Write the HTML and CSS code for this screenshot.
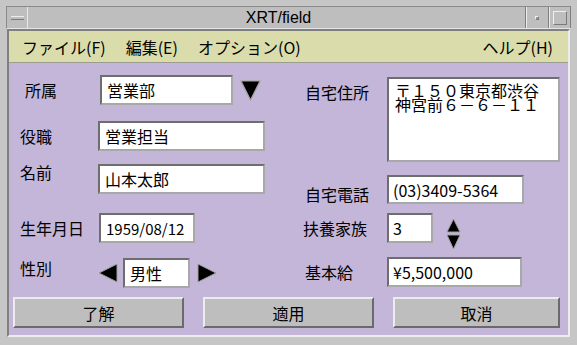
FILE: index.html
```html
<!DOCTYPE html>
<html lang="ja">
<head>
  <meta charset="UTF-8">
  <meta name="viewport" content="width=device-width, initial-scale=1.0">
  <link rel="stylesheet" href="styles.css">
  <title>XRT/field</title>
</head>
<body>
  <div class="window">
    <div class="titlebar">
      <div class="tb-menu"><span class="bar"></span></div>
      <div class="tb-title">XRT/field</div>
      <div class="tb-min"><span class="dot"></span></div>
      <div class="tb-max"><span class="box"></span></div>
    </div>

    <div class="client">
      <div class="menubar">
        <span class="menu">ファイル(<u>F</u>)</span>
        <span class="menu">編集(<u>E</u>)</span>
        <span class="menu">オプション(<u>O</u>)</span>
        <span class="menu help">ヘルプ(<u>H</u>)</span>
      </div>

      <div class="content">
        <div class="form">
          <div class="col col-left">
            <div class="row">
              <label class="lbl indent">所属</label>
              <input class="field f-dept" value="営業部">
              <svg class="drop" width="21" height="21" viewBox="0 0 21 21">
                <polygon points="1,1 20,1 10.5,20" fill="#000" stroke="#a0a0a0" stroke-width="1.2"/>
              </svg>
            </div>
            <div class="row r-title">
              <label class="lbl">役職</label>
              <input class="field f-wide" value="営業担当">
            </div>
            <div class="row r-name">
              <label class="lbl top">名前</label>
              <input class="field f-wide" value="山本太郎">
            </div>
            <div class="row r-birth">
              <label class="lbl">生年月日</label>
              <input class="field f-date" value="1959/08/12">
            </div>
            <div class="row r-sex">
              <label class="lbl top sex">性別</label>
              <svg class="arrow" width="20" height="20" viewBox="0 0 20 20">
                <polygon points="1,10 19,1 19,19" fill="#000" stroke="#a0a0a0"/>
              </svg>
              <input class="field f-sex" value="男性">
              <svg class="arrow arrow-r" width="20" height="20" viewBox="0 0 20 20">
                <polygon points="1,1 19,10 1,19" fill="#000" stroke="#a0a0a0"/>
              </svg>
            </div>
          </div>

          <div class="col col-right">
            <div class="row r-addr">
              <label class="lbl wide top addr">自宅住所</label>
              <textarea class="field f-addr">〒１５０東京都渋谷
神宮前６－６－１１</textarea>
            </div>
            <div class="row r-phone">
              <label class="lbl wide phone">自宅電話</label>
              <input class="field f-phone" value="(03)3409-5364">
            </div>
            <div class="row r-family">
              <label class="lbl wide family">扶養家族</label>
              <input class="field f-num" value="3">
              <svg class="spin" width="15" height="32" viewBox="0 0 15 32">
                <polygon points="7.5,1 14,14 1,14" fill="#000" stroke="#a0a0a0"/>
                <polygon points="1,17 14,17 7.5,31" fill="#000" stroke="#a0a0a0"/>
              </svg>
            </div>
            <div class="row r-salary">
              <label class="lbl wide">基本給</label>
              <input class="field f-salary" value="¥5,500,000">
            </div>
          </div>
        </div>

        <div class="buttons">
          <button class="btn">了解</button>
          <button class="btn">適用</button>
          <button class="btn">取消</button>
        </div>
      </div>
    </div>
  </div>
</body>
</html>
```

FILE: styles.css
```css
body {
  margin: 0;
  width: 577px;
  height: 345px;
  overflow: hidden;
  background-color: #c6c6c6;
  font-family: "Noto Sans CJK JP", "Liberation Sans", sans-serif;
  font-size: 16px;
  color: #000;
}

.window {
  height: 345px;
  display: flex;
  flex-direction: column;
  box-sizing: border-box;
  padding: 6px 6px 8px 6px;
}

/* title bar */
.titlebar {
  display: flex;
  height: 21px;
  background-color: #bebebe;
  border-top: 1px solid #8a8a8a;
  border-left: 1px solid #8a8a8a;
  border-bottom: 1px solid #e4e4e4;
}

.tb-menu {
  width: 20px;
  border-right: 1px solid #e8e8e8;
  display: flex;
  align-items: center;
  justify-content: center;
}

.tb-menu .bar {
  width: 13px;
  height: 2px;
  border-top: 1px solid #ececec;
  border-bottom: 1px solid #7a7a7a;
  background-color: #bebebe;
}

.tb-title {
  flex: 1;
  text-align: center;
  font-family: "Liberation Sans", sans-serif;
  font-size: 16px;
  line-height: 21px;
  padding-left: 4px;
}

.tb-min, .tb-max {
  width: 22px;
  border-left: 1px solid #7e7e7e;
  box-shadow: inset 1px 0 #ececec;
  display: flex;
  align-items: center;
  justify-content: center;
}

.tb-max {
  width: 21px;
  border-right: 1px solid #7e7e7e;
}

.tb-min .dot {
  width: 2px;
  height: 2px;
  background-color: #9a9a9a;
  border: 1px solid;
  border-color: #f0f0f0 #7a7a7a #7a7a7a #f0f0f0;
}

.tb-max .box {
  width: 12px;
  height: 12px;
  border: 1px solid;
  border-color: #f0f0f0 #7a7a7a #7a7a7a #f0f0f0;
}

/* client area */
.client {
  flex: 1;
  display: flex;
  flex-direction: column;
  margin: 0 1px 0 1px;
  border: 2px solid;
  border-color: #808080 #ececec #ececec #808080;
}

.menubar {
  height: 31px;
  display: flex;
  align-items: center;
  gap: 20px;
  padding: 0 15px 0 13px;
  background-color: #dadcab;
  border-bottom: 1px solid #9c9c90;
}

.menu u {
  text-decoration: none;
}

.help {
  margin-left: auto;
}

.content {
  flex: 1;
  background-color: #c3b6d8;
}

.form {
  display: flex;
  height: 225px;
}

.col {
  display: flex;
  flex-direction: column;
}

.col-left {
  width: 280px;
  padding: 12px 0 0 11px;
}

.col-right {
  padding: 14px 0 0 5px;
}

.row {
  display: flex;
  align-items: center;
  height: 30px;
}

.r-title { margin-top: 16px; }
.r-name { margin-top: 13px; }
.r-birth { margin-top: 19px; }
.r-sex { margin-top: 15px; }

.r-addr { height: 85px; align-items: flex-start; }
.r-phone { margin-top: 13px; height: 29px; }
.r-family { margin-top: 9px; }
.r-salary { margin-top: 14px; }

.lbl {
  width: 78px;
  flex: none;
  line-height: 16px;
}

.lbl.wide {
  width: 82px;
}

.indent {
  padding-left: 5px;
  box-sizing: border-box;
}

.top {
  align-self: flex-start;
}

.sex { margin-top: 2px; }
.addr { margin-top: 7px; }
.phone { margin-top: 8px; }
.family { margin-left: -2px; margin-right: 2px; }

/* fields */
.field {
  box-sizing: border-box;
  height: 30px;
  margin: 0;
  padding: 0 4px;
  border: 2px solid;
  border-color: #6e6e6e #a8a8a8 #a8a8a8 #6e6e6e;
  background-color: #fff;
  font-family: "Noto Sans CJK JP", sans-serif;
  font-size: 16px;
  color: #000;
  outline: none;
}

.f-dept { width: 133px; margin-left: 2px; padding-left: 5px; }
.f-wide { width: 167px; padding-left: 5px; }
.f-date { width: 96px; margin-left: 1px; padding-left: 5px; font-size: 15px; }
.f-sex { width: 67px; margin-left: 5px; padding-left: 5px; }

.f-addr {
  width: 173px;
  height: 85px;
  padding: 4px 0 0 6px;
  line-height: 14px;
  resize: none;
  overflow: hidden;
}

.f-phone { width: 137px; height: 29px; }
.f-num { width: 46px; }
.f-salary { width: 135px; }

.drop { margin-left: 7px; }
.arrow-r { margin-left: 7px; }

.spin {
  align-self: flex-start;
  margin: 5px 0 0 13px;
}

/* buttons */
.buttons {
  display: grid;
  grid-template-columns: 171px 171px 167px;
  gap: 19px;
  margin-top: 9px;
  padding-left: 4px;
}

.btn {
  height: 31px;
  margin: 0;
  padding: 0;
  border: 2px solid;
  border-color: #ececec #6a6a6a #6a6a6a #ececec;
  background-color: #bebebe;
  font-family: "Noto Sans CJK JP", sans-serif;
  font-size: 16px;
  color: #000;
}
```
